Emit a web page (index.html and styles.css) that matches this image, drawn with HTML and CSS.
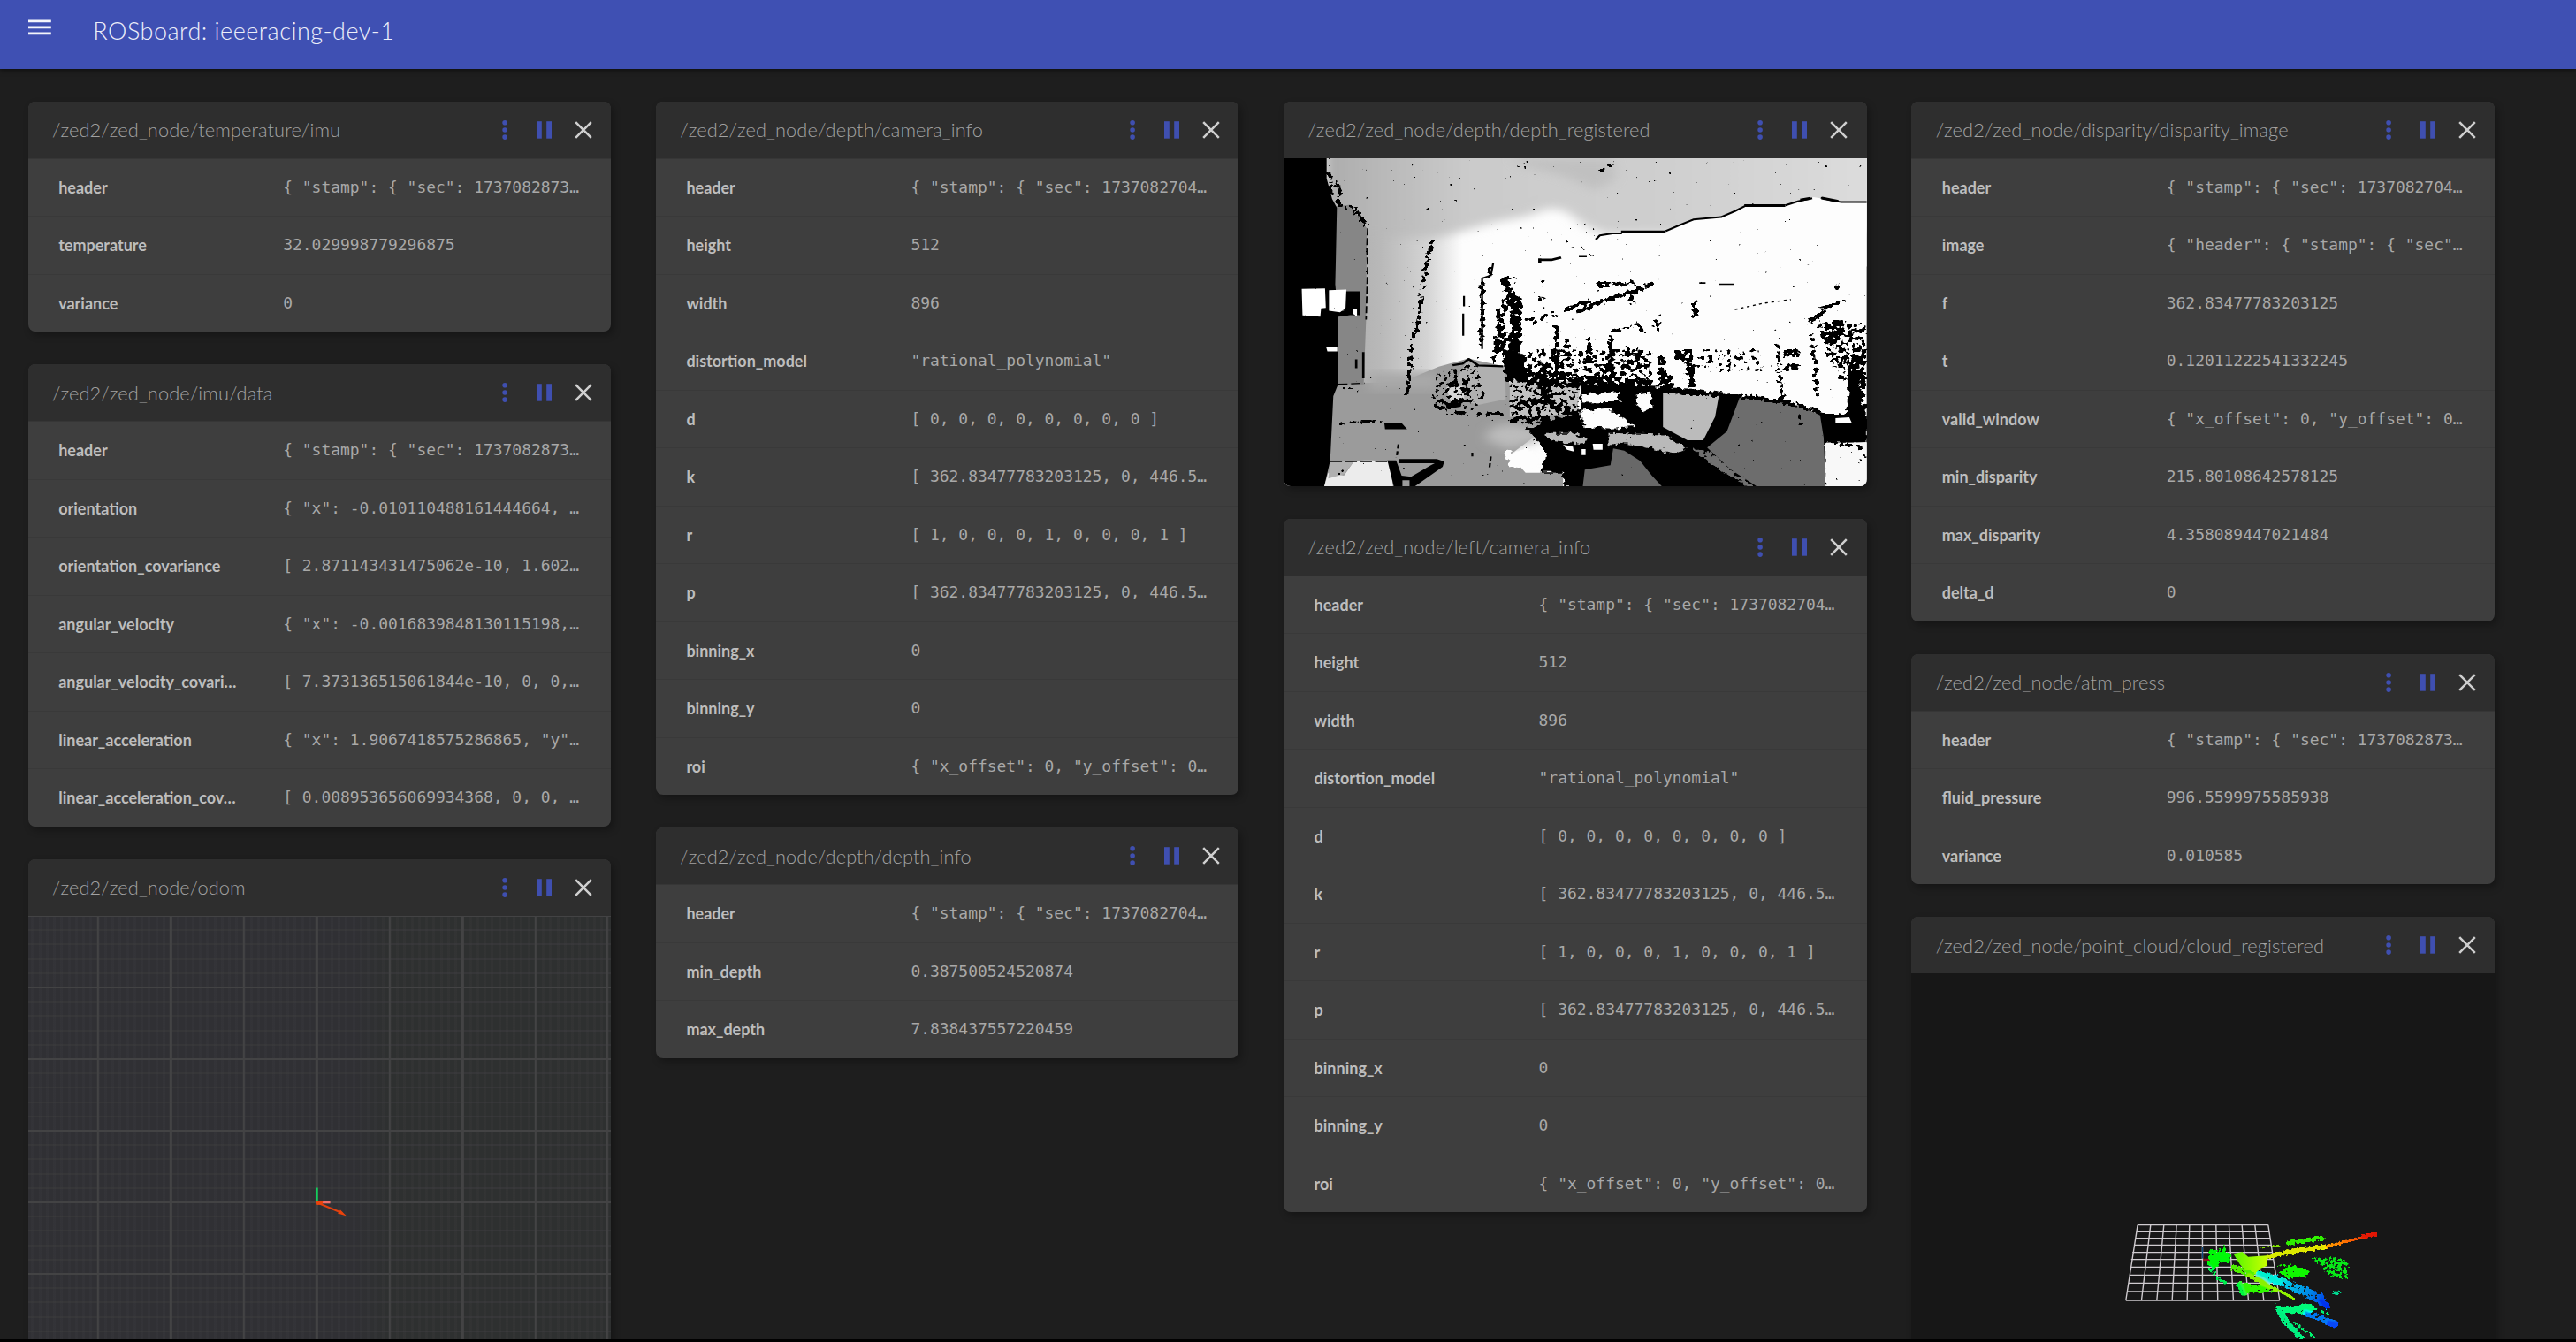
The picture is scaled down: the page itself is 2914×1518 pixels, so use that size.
FILE: index.html
```html
<!DOCTYPE html>
<html lang="en">
<head>
<meta charset="utf-8">
<title>ROSboard: ieeeracing-dev-1</title>
<link rel="stylesheet" href="styles.css">
</head>
<body>
<svg class="sprite" width="0" height="0" aria-hidden="true">
  <symbol id="actions" viewBox="0 0 110 30">
    <g fill="#3f4fb0"><circle cx="9.1" cy="6.8" r="2.8"/><circle cx="9.1" cy="15" r="2.8"/><circle cx="9.1" cy="23.1" r="2.8"/>
    <rect x="45" y="5.2" width="5.8" height="19.5"/><rect x="56.2" y="5.2" width="5.8" height="19.5"/></g>
    <path d="M89.2 6.2 106.8 23.8M106.8 6.2 89.2 23.8" stroke="#cfcfcf" stroke-width="2.5" fill="none"/>
  </symbol>
</svg>
<header class="bar">
  <svg class="menu" viewBox="0 0 26 18"><path d="M0 1.8H25.8M0 8.8H25.8M0 15.8H25.8" stroke="#f4f5fb" stroke-width="2.8"/></svg>
  <h1>ROSboard: ieeeracing-dev-1</h1>
</header>
<main class="board">
  <div class="col">
    <section class="card">
      <header><h2>/zed2/zed_node/temperature/imu</h2><svg class="actions"><use href="#actions"/></svg></header>
      <dl>
        <div><dt>header</dt><dd>{ "stamp": { "sec": 1737082873…</dd></div>
        <div><dt>temperature</dt><dd>32.029998779296875</dd></div>
        <div><dt>variance</dt><dd>0</dd></div>
      </dl>
    </section>
    <section class="card">
      <header><h2>/zed2/zed_node/imu/data</h2><svg class="actions"><use href="#actions"/></svg></header>
      <dl>
        <div><dt>header</dt><dd>{ "stamp": { "sec": 1737082873…</dd></div>
        <div><dt>orientation</dt><dd>{ "x": -0.010110488161444664, …</dd></div>
        <div><dt>orientation_covariance</dt><dd>[ 2.871143431475062e-10, 1.602…</dd></div>
        <div><dt>angular_velocity</dt><dd>{ "x": -0.0016839848130115198,…</dd></div>
        <div><dt>angular_velocity_covari…</dt><dd>[ 7.373136515061844e-10, 0, 0,…</dd></div>
        <div><dt>linear_acceleration</dt><dd>{ "x": 1.9067418575286865, "y"…</dd></div>
        <div><dt>linear_acceleration_cov…</dt><dd>[ 0.008953656069934368, 0, 0, …</dd></div>
      </dl>
    </section>
    <section class="card">
      <header><h2>/zed2/zed_node/odom</h2><svg class="actions"><use href="#actions"/></svg></header>
      <div class="odom">
        <svg viewBox="0 0 660 660">
          <path d="M326.4 324V307.5" stroke="#12cf5c" stroke-width="2.6"/>
          <path d="M327 324H341.6" stroke="#f07070" stroke-width="2.6"/>
          <path d="M327 324.5 355 336" stroke="#e0400f" stroke-width="2"/>
          <path d="M325.5 322.5h8l-1 4-6 .5zM353 332.5 360 339.5 350 336.5z" fill="#ea430c"/>
        </svg>
      </div>
    </section>
  </div>
  <div class="col">
    <section class="card">
      <header><h2>/zed2/zed_node/depth/camera_info</h2><svg class="actions"><use href="#actions"/></svg></header>
      <dl>
        <div><dt>header</dt><dd>{ "stamp": { "sec": 1737082704…</dd></div>
        <div><dt>height</dt><dd>512</dd></div>
        <div><dt>width</dt><dd>896</dd></div>
        <div><dt>distortion_model</dt><dd>"rational_polynomial"</dd></div>
        <div><dt>d</dt><dd>[ 0, 0, 0, 0, 0, 0, 0, 0 ]</dd></div>
        <div><dt>k</dt><dd>[ 362.83477783203125, 0, 446.5…</dd></div>
        <div><dt>r</dt><dd>[ 1, 0, 0, 0, 1, 0, 0, 0, 1 ]</dd></div>
        <div><dt>p</dt><dd>[ 362.83477783203125, 0, 446.5…</dd></div>
        <div><dt>binning_x</dt><dd>0</dd></div>
        <div><dt>binning_y</dt><dd>0</dd></div>
        <div><dt>roi</dt><dd>{ "x_offset": 0, "y_offset": 0…</dd></div>
      </dl>
    </section>
    <section class="card">
      <header><h2>/zed2/zed_node/depth/depth_info</h2><svg class="actions"><use href="#actions"/></svg></header>
      <dl>
        <div><dt>header</dt><dd>{ "stamp": { "sec": 1737082704…</dd></div>
        <div><dt>min_depth</dt><dd>0.387500524520874</dd></div>
        <div><dt>max_depth</dt><dd>7.838437557220459</dd></div>
      </dl>
    </section>
  </div>
  <div class="col">
    <section class="card">
      <header><h2>/zed2/zed_node/depth/depth_registered</h2><svg class="actions"><use href="#actions"/></svg></header>
      <svg class="depth" viewBox="27 232 1477 1114" preserveAspectRatio="none">
        <defs>
          <linearGradient id="wall" x1="0" x2="1"><stop offset="0" stop-color="#a8a8a8"/><stop offset=".4" stop-color="#b8b8b8"/><stop offset=".75" stop-color="#d4d4d4"/><stop offset="1" stop-color="#fdfdfd"/></linearGradient>
          <linearGradient id="ceil" x1="0" x2="1"><stop offset="0" stop-color="#acacac"/><stop offset=".25" stop-color="#cbcbcb"/><stop offset=".6" stop-color="#cfcfcf"/><stop offset="1" stop-color="#dedede"/></linearGradient>
          <filter id="soft" x="-20%" y="-20%" width="140%" height="140%"><feGaussianBlur stdDeviation="16"/></filter>
          <filter id="rag" filterUnits="userSpaceOnUse" x="0" y="200" width="1540" height="1180" color-interpolation-filters="sRGB">
            <feTurbulence type="fractalNoise" baseFrequency=".085 .075" numOctaves="2" seed="5"/>
            <feColorMatrix values="0 0 0 0 0 0 0 0 0 0 0 0 0 0 0 0 0 0 1 0" result="n"/>
            <feGaussianBlur in="SourceAlpha" stdDeviation="3"/>
            <feComposite in2="n" operator="arithmetic" k2="10" k3="20" k4="-16" result="m"/>
            <feFlood flood-color="#000"/><feComposite in2="m" operator="in"/>
          </filter>
          <filter id="edge" filterUnits="userSpaceOnUse" x="0" y="200" width="1540" height="1180">
            <feTurbulence type="fractalNoise" baseFrequency=".06" numOctaves="2" seed="9"/>
            <feDisplacementMap in="SourceGraphic" scale="26" xChannelSelector="R" yChannelSelector="G"/>
          </filter>
        </defs>
        <rect x="27" y="232" width="1477" height="1114" fill="#fdfdfd"/>
        <rect x="130" y="400" width="350" height="950" fill="url(#wall)"/>
        <path d="M130 120H1600V480L985 490 840 490 790 460 740 410 700 402 640 430 560 450 480 480 420 500 130 500Z" fill="url(#ceil)" filter="url(#soft)"/>
        <path d="M1504 384 1440 381 1370 364 1330 378 1298 392 1200 392 1170 412 1130 432 1065 440 1025 462 990 481 884 484 828 494 810 520 820 600 1504 600Z" fill="#fdfdfd"/>
        <path d="M860 232 870 300 820 340 730 290 640 260 600 232Z" fill="#b8b8b8" opacity=".6" filter="url(#soft)"/>
        <!-- left wall and floor -->
        <path d="M150 1000 330 990 420 940 495 912 590 940 600 1000 770 1070 800 1150 660 1180 600 1240 640 1300 735 1300V1346H130Z" fill="#9b9b9b"/>
        <path d="M240 960H420V1020H240Z" fill="#a8a8a8" filter="url(#soft)"/>
        <path d="M600 985 780 990 770 1100 600 1110Z" fill="#c2c2c2"/>
        <path d="M540 1170C570 1120 620 1130 680 1160L680 1190 600 1220 540 1190Z" fill="#bcbcbc" filter="url(#soft)"/>
        <path d="M490 925 588 940 590 1050 520 1070 440 1040Z" fill="#b0b0b0"/>
        <path d="M440 1010 480 1005 485 1050 450 1058Z" fill="#d8d8d8"/>
        <path d="M158 395 195 390 238 470 236 780 230 1000 165 1000 166 770 158 680Z" fill="#868686"/>
        <path d="M27 232H136V300L150 370 162 400 158 660 165 780 165 1000 153 1040 145 1260 130 1346H27Z"/>
        <path d="M205 1262C230 1255 290 1258 296 1268L304 1346H130L140 1300 180 1310Z" fill="#ececec"/>
        <path d="M145 1262H205L180 1305 140 1320Z" fill="#b0b0b0"/>
        <!-- windows seen through the left border -->
        <path d="M180 684H220V765H195L166 770 158 755 180 750Z"/>
        <path d="M73 676 132 674 134 740 122 742 120 770 75 766ZM142 680 186 678 184 740 170 755 142 750ZM203 744H213V768H203ZM135 874H163V888H138Z" fill="#fff"/>
        <!-- furniture on the right -->
        <g filter="url(#edge)">
          <path d="M780 1000 860 1000 990 1010 1060 1015 1180 1040 1300 1060 1395 1100 1504 1110V1200H1400L1400 1350H735V1300L680 1300 690 1220 640 1150 700 1120 780 1100Z"/>
          <path d="M1450 1100 1465 980 1480 960 1490 1060 1504 1070V1190H1395V1100Z"/>
          <path d="M580 880 640 900 645 990 590 985Z"/>
          <path d="M780 1090 850 1080 900 1130 915 1145 860 1150 785 1145ZM780 1035 875 1025 880 1060 785 1062ZM920 1035 955 1030 960 1080 940 1092 920 1070ZM590 1230 650 1220 680 1260 670 1290 600 1280Z" fill="#fdfdfd"/>
          <path d="M850 1165 990 1170 1050 1215 1010 1235 930 1210 880 1195 850 1215ZM690 1165 760 1165 790 1185 780 1205 700 1190Z" fill="#b9b9b9"/>
          <path d="M1060 1215 1110 1235 1160 1290 1220 1350 1180 1330 1100 1260Z" fill="#707070"/>
        </g>
        <path d="M988 1028 1130 1036 1120 1110 1090 1190 1050 1190 988 1145Z" fill="#bbbbbb"/>
        <path d="M1182 1046 1250 1052 1340 1075 1386 1105 1395 1180 1400 1346H1225L1160 1290 1100 1215 1150 1160Z" fill="#6d6d6d"/>
        <path d="M785 1346 790 1290 855 1275 862 1218 890 1225 930 1260 960 1310 985 1346Z" fill="#686868"/>
        <path d="M1402 1200 1504 1196V1346H1410L1400 1320Z" fill="#f8f8f8"/>
        <path d="M1425 1115 1460 1112 1466 1130 1425 1130ZM1395 1080 1400 940 1450 930 1455 1060 1440 1100Z" fill="#fdfdfd"/>
        <path d="M735 1205 760 1212 762 1228 745 1222ZM810 1202H835V1222H812ZM782 1220H792V1240H782Z" fill="#fff"/>
        <!-- triangular frame at the bottom left -->
        <path d="M290 1258 312 1258 326 1310 350 1314 400 1275 410 1268H320V1254H415L434 1262 430 1280 360 1346H346V1326H328V1346H306ZM282 1130H325L340 1152H284ZM438 1064 478 1064 476 1076 440 1084Z"/>
        <!-- dropout contours -->
        <g fill="none" stroke="#000" stroke-linejoin="round">
          <path d="M818 508 828 494 860 487H884M995 479 1025 462 1065 440 1135 432 1170 412 1196 394M1298 392 1330 378 1366 368M1388 366 1420 376 1440 381H1504" stroke-width="6"/>
          <path d="M882 482H995M1194 393H1298M1336 374 1362 368M1390 367 1432 378" stroke-width="9"/>
          <path d="M674 577H705L730 569M676 586V572" stroke-width="8"/>
          <path d="M775 566H795M1130 660H1168M1080 656H1096" stroke-width="5"/>
          <path d="M455 935 480 930 496 914 520 936 583 939" stroke-width="7"/>
          <path d="M558 588 552 630 530 640V880M484 700V735M482 760V835" stroke-width="5"/>
          <path d="M165 1000 232 996M240 470 238 540 240 600 236 780" stroke-width="4" stroke-dasharray="24 9"/>
          <path d="M229 890V980M211 915V945" stroke-width="6"/>
          <path d="M145 1262H290" stroke-width="5" stroke-dasharray="30 8"/>
          <path d="M318 1204 313 1250M552 1245 548 1290M505 1232V1245" stroke-width="5" stroke-dasharray="14 9"/>
          <path d="M1170 746 1240 725 1312 712" stroke-width="4" stroke-dasharray="7 9"/>
        </g>
        <g filter="url(#rag)" stroke="#000" fill="none">
          <path d="M405 505 392 560 380 660 372 760 352 860 345 960 340 1040" stroke-width="13" opacity=".8"/>
          <path d="M138 280 178 360M140 330 165 390 205 400 236 465" stroke-width="16" opacity=".75"/>
          <path d="M549 600 545 640M575 640 620 640M530 650V870" stroke-width="12" opacity=".9"/>
          <path d="M582 640 605 690 575 760 580 870 610 830 625 720" stroke-width="22" opacity=".9"/>
          <path d="M615 700V870L590 930" stroke-width="30"/>
          <path d="M565 830 560 930" stroke-width="12" opacity=".85"/>
          <path d="M735 750 800 715M770 755 860 705 930 680 965 655M815 670 850 655" stroke-width="15" opacity="1"/>
          <path d="M640 790 720 760" stroke-width="24" opacity=".65"/>
          <path d="M820 660 930 660" stroke-width="24" opacity=".6"/>
          <path d="M1066 715 1070 775M1430 660V680M972 780V820M682 640V655M682 700V720M908 690V730" stroke-width="16" opacity=".85"/>
          <path d="M718 800V990M745 840V920M800 840 800 920M855 830V950" stroke-width="13" opacity=".95"/>
          <path d="M860 820 930 795 938 830" stroke-width="14" opacity=".75"/>
          <path d="M640 880 H960 V1010 H640Z" fill="#000" stroke="none" opacity=".54"/>
          <path d="M640 980 960 1005" stroke-width="40" opacity=".72"/>
          <path d="M690 930V1000M850 930V1000M590 980 640 975" stroke-width="26" opacity=".85"/>
          <path d="M900 870V950M925 875V950" stroke-width="12" opacity=".85"/>
          <path d="M985 900V1020M1005 960V1020M1050 880 1062 1010" stroke-width="22" opacity=".85"/>
          <path d="M1015 900H1040" stroke-width="34"/>
          <path d="M1080 880H1240V960H1060Z" fill="#000" stroke="none" opacity=".4"/>
          <path d="M1088 908H1110M1165 908H1190" stroke-width="10"/>
          <path d="M1278 860 1290 1050M1365 830 1380 1040" stroke-width="14" opacity=".78"/>
          <path d="M1292 893H1335M1298 942H1335" stroke-width="26" opacity=".95"/>
          <path d="M1350 800 1395 740 1455 712M1375 800 1400 745" stroke-width="15" opacity=".78"/>
          <path d="M1380 790 1504 790V1000H1440L1400 900Z" fill="#000" stroke="none" opacity=".6"/>
          <path d="M1400 850 1440 780M1480 900V1060" stroke-width="42" opacity=".88"/>
          <path d="M410 950 520 930 540 1040 500 1100 400 1080Z" fill="#000" stroke="none" opacity=".46"/>
          <path d="M440 1000 485 990 490 1050 440 1070 410 1080" stroke-width="16" opacity=".74"/>
          <path d="M595 1000 780 1000V1130H600Z" fill="#000" stroke="none" opacity=".52"/>
          <path d="M610 1070 680 1060 780 1100M690 1000V1050M600 1120 700 1125" stroke-width="26" opacity=".72"/>
          <path d="M165 1130 280 1125M440 1100H590M360 1135H370M155 1015H220" stroke-width="14" opacity=".66"/>
          <path d="M740 520 810 560M620 270 650 245M820 280 880 240" stroke-width="18" opacity=".48"/>
          <path d="M990 1024 1180 1040 1300 1060 1390 1095" stroke-width="18" opacity=".85"/>
          <path d="M1420 1200 1500 1215M1490 1250H1504" stroke-width="16" opacity=".7"/>
          <path d="M1336 1100 1338 1140M150 1310 190 1285M540 1300H550" stroke-width="14" opacity=".5"/>
        </g>
      </svg>
    </section>
    <section class="card">
      <header><h2>/zed2/zed_node/left/camera_info</h2><svg class="actions"><use href="#actions"/></svg></header>
      <dl>
        <div><dt>header</dt><dd>{ "stamp": { "sec": 1737082704…</dd></div>
        <div><dt>height</dt><dd>512</dd></div>
        <div><dt>width</dt><dd>896</dd></div>
        <div><dt>distortion_model</dt><dd>"rational_polynomial"</dd></div>
        <div><dt>d</dt><dd>[ 0, 0, 0, 0, 0, 0, 0, 0 ]</dd></div>
        <div><dt>k</dt><dd>[ 362.83477783203125, 0, 446.5…</dd></div>
        <div><dt>r</dt><dd>[ 1, 0, 0, 0, 1, 0, 0, 0, 1 ]</dd></div>
        <div><dt>p</dt><dd>[ 362.83477783203125, 0, 446.5…</dd></div>
        <div><dt>binning_x</dt><dd>0</dd></div>
        <div><dt>binning_y</dt><dd>0</dd></div>
        <div><dt>roi</dt><dd>{ "x_offset": 0, "y_offset": 0…</dd></div>
      </dl>
    </section>
  </div>
  <div class="col">
    <section class="card">
      <header><h2>/zed2/zed_node/disparity/disparity_image</h2><svg class="actions"><use href="#actions"/></svg></header>
      <dl>
        <div><dt>header</dt><dd>{ "stamp": { "sec": 1737082704…</dd></div>
        <div><dt>image</dt><dd>{ "header": { "stamp": { "sec"…</dd></div>
        <div><dt>f</dt><dd>362.83477783203125</dd></div>
        <div><dt>t</dt><dd>0.12011222541332245</dd></div>
        <div><dt>valid_window</dt><dd>{ "x_offset": 0, "y_offset": 0…</dd></div>
        <div><dt>min_disparity</dt><dd>215.80108642578125</dd></div>
        <div><dt>max_disparity</dt><dd>4.358089447021484</dd></div>
        <div><dt>delta_d</dt><dd>0</dd></div>
      </dl>
    </section>
    <section class="card">
      <header><h2>/zed2/zed_node/atm_press</h2><svg class="actions"><use href="#actions"/></svg></header>
      <dl>
        <div><dt>header</dt><dd>{ "stamp": { "sec": 1737082873…</dd></div>
        <div><dt>fluid_pressure</dt><dd>996.5599975585938</dd></div>
        <div><dt>variance</dt><dd>0.010585</dd></div>
      </dl>
    </section>
    <section class="card">
      <header><h2>/zed2/zed_node/point_cloud/cloud_registered</h2><svg class="actions"><use href="#actions"/></svg></header>
      <svg class="cloud" viewBox="-653.4 -780 1978.8 1980">
        <defs>
          <filter id="pts" filterUnits="userSpaceOnUse" x="300" y="50" width="700" height="450" color-interpolation-filters="sRGB">
            <feTurbulence type="fractalNoise" baseFrequency=".1" numOctaves="2" seed="3"/>
            <feColorMatrix values="0 0 0 0 0 0 0 0 0 0 0 0 0 0 0 0 0 0 1 0" result="n"/>
            <feGaussianBlur in="SourceAlpha" stdDeviation="2.5"/>
            <feComposite in2="n" operator="arithmetic" k2="11" k3="16" k4="-13" result="m"/>
            <feComponentTransfer in="SourceGraphic"><feFuncA type="linear" slope="50"/></feComponentTransfer>
            <feMorphology operator="dilate" radius="3"/>
            <feComposite in2="m" operator="in"/>
          </filter>
          <linearGradient id="beam" gradientUnits="userSpaceOnUse" x1="550" y1="0" x2="930" y2="0"><stop offset="0" stop-color="#c8f000"/><stop offset=".3" stop-color="#f0e000"/><stop offset=".65" stop-color="#ff8000"/><stop offset="1" stop-color="#e01005"/></linearGradient>
          <linearGradient id="fan" gradientUnits="userSpaceOnUse" x1="430" y1="0" x2="550" y2="0"><stop offset="0" stop-color="#4cf500"/><stop offset="1" stop-color="#c4ff00"/></linearGradient>
          <linearGradient id="deep" gradientUnits="userSpaceOnUse" x1="520" y1="230" x2="760" y2="350"><stop offset="0" stop-color="#00ffb0"/><stop offset=".25" stop-color="#00e4e8"/><stop offset=".7" stop-color="#0088e8"/><stop offset="1" stop-color="#0030e8"/></linearGradient>
        </defs>
        <path d="M115 74H558M110 97H563M106 119H567M102 142H570M97 167H573M93 191H577M91 217H580M86 244H584M83 271H587M79 300H591M75 330H597M115 74 75 330M159 74 128 330M204 74 180 330M247 74 232 330M291 74 283 330M335 74 335 330M381 74 387 330M425 74 440 330M469 74 491 330M513 74 543 330M558 74 597 330" fill="none" stroke="#cfcbcf" stroke-width="4.2"/>
        <path d="M335 150V188" stroke="#104a80" stroke-width="4"/><path d="M337 192H358" stroke="#8a1420" stroke-width="7"/>
        <path d="M440 172 470 165 490 182 553 178 556 212 530 222 515 242 488 236 462 208Z" fill="url(#fan)"/>
        <path d="M552 181 640 165 750 148 850 123" stroke="url(#beam)" stroke-width="5" fill="none"/>
        <g filter="url(#pts)">
          <path d="M360 155 400 160 410 140 416 165 435 172 425 205 395 200 380 225 350 210Z" fill="#00f808" opacity=".88"/>
          <path d="M355 215 385 255 425 275" stroke="#00f050" fill="none" stroke-width="12" opacity=".72"/>
          <path d="M430 215 500 240 560 280" stroke="#50f000" fill="none" stroke-width="22" opacity=".78"/>
          <path d="M455 260 480 270 560 285 590 300 480 310Z" fill="#30f800" opacity=".8"/>
          <path d="M490 245 580 290 648 326" stroke="#90f000" fill="none" stroke-width="11" opacity=".9"/>
          <path d="M455 270 475 315" stroke="#00f840" stroke-width="18" opacity=".85"/>
          <path d="M550 182 640 164 740 150 860 120 930 104" stroke="url(#beam)" stroke-width="10" fill="none"/>
          <path d="M560 180 660 160 750 148" stroke="#d8e800" stroke-width="18" fill="none" opacity=".75"/>
          <path d="M870 114 930 104" stroke="#e01505" stroke-width="15" opacity=".8"/>
          <path d="M535 150 600 145" stroke="#80e000" stroke-width="10" opacity=".6"/>
          <path d="M620 136 750 117" stroke="#30f000" stroke-width="16" opacity=".88"/>
          <path d="M590 235 650 210 700 230 690 250 620 250Z" fill="#10f800" opacity=".85"/>
          <path d="M590 210 640 215M600 262 660 240" stroke="#10f000" stroke-width="14" opacity=".6"/>
          <path d="M700 185 800 185 830 200 828 262 770 250 740 225Z" fill="#08e818" opacity=".56"/>
          <path d="M515 232 560 235 640 265 740 305 770 350 735 345 640 300 560 270Z" fill="url(#deep)" opacity=".68"/>
          <path d="M520 235 600 270" stroke="#00f0d0" stroke-width="18" opacity=".85"/>
          <path d="M730 325 765 355" stroke="#0030ee" stroke-width="18" opacity=".8"/>
          <path d="M775 308 805 298" stroke="#00d890" stroke-width="18" opacity=".6"/>
          <path d="M575 345 620 350 700 340 730 360 680 375 620 375Z" fill="#00fa78" opacity=".92"/>
          <path d="M590 355 620 405 675 462" stroke="#00f080" stroke-width="20" fill="none" opacity=".85"/>
          <path d="M640 400 720 460M730 365 770 378" stroke="#00f070" stroke-width="9" opacity=".75"/>
          <path d="M680 372 790 410" stroke="#0078f0" stroke-width="20" opacity=".75"/>
          <path d="M755 405 795 412" stroke="#0848f8" stroke-width="22"/>
          <path d="M812 400V420" stroke="#00c080" stroke-width="9" opacity=".6"/>
        </g>
      </svg>
    </section>
  </div>
</main>
<footer class="edge"></footer>
</body>
</html>
```
FILE: styles.css
```css
* { box-sizing: border-box; margin: 0; padding: 0; }
html, body { height: 1518px; overflow: hidden; background: #1e1e1e; }
body { display: flex; flex-direction: column; font-family: "Lato", "Open Sans", sans-serif; color: #c8c8c8; }
.sprite { display: none; }
.bar { flex: none; height: 78px; display: flex; align-items: flex-start; padding-left: 31.7px; background: #3f50b3; box-shadow: 0 2px 5px rgba(0,0,0,.5); position: relative; z-index: 1; }
.menu { width: 26px; height: 18px; margin-top: 21.8px; margin-right: 47.6px; }
.bar h1 { font-size: 27px; line-height: 34px; margin-top: 18px; font-weight: 300; color: #eceefa; letter-spacing: .5px; white-space: nowrap; }
.board { flex: none; height: 1437px; overflow: hidden; display: grid; grid-template-columns: repeat(4, 659.6px); column-gap: 50.6px; padding: 36.6px 0 0 31.7px; align-items: start; }
.col { display: flex; flex-direction: column; gap: 37.1px; }
.card { border-radius: 8px; background: #3e3e3e; box-shadow: 3px 4px 8px rgba(0,0,0,.3); overflow: hidden; }
.card header { height: 64px; display: flex; align-items: center; justify-content: space-between; padding: 0 20px 0 27.4px; background: #2e2e2e; }
.card h2 { font-size: 21.8px; font-weight: 300; color: #a2a2a2; letter-spacing: .1px; white-space: nowrap; }
.actions { width: 110px; height: 30px; margin-right: -.7px; flex: none; }
.card dl > div { height: 65.5px; display: flex; align-items: center; padding-left: 34.5px; border-top: 1px solid #393939; }
.card dl > div:first-child { border-top-color: #363636; }
.card dt { width: 254px; font-size: 18px; font-weight: 700; color: #bdbdbd; white-space: nowrap; }
.card dd { font: 17.94px/24px "DejaVu Sans Mono", monospace; color: #a8a8a8; white-space: pre; }
.depth { display: block; width: 100%; height: 371px; }
.cloud { display: block; width: 100%; height: 660px; background: #171717; }
.odom { height: 660px; background:
  repeating-linear-gradient(90deg, #434344 0 2.4px, transparent 2.4px 82.56px) -5.2px 0,
  repeating-linear-gradient(180deg, #434344 0 2.4px, transparent 2.4px 81px) 0 -1px,
  repeating-linear-gradient(90deg, rgba(70,70,72,.16) 0 3px, transparent 3px 8.256px) -5px 0,
  repeating-linear-gradient(180deg, #363638 0 2px, transparent 2px 16.2px) 0 -1px,
  linear-gradient(90deg, #303034 56%, #2e3030 62%); }
.odom svg { display: block; width: 660px; height: 660px; }
.edge { height: 3px; background: #000; }
```
